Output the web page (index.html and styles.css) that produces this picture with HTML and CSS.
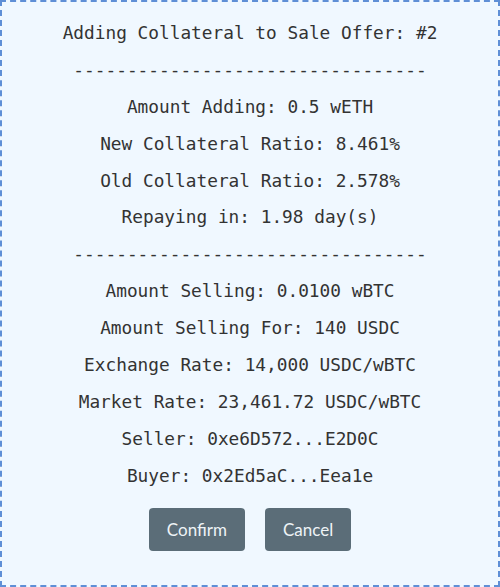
FILE: index.html
```html
<!DOCTYPE html>
<html>
<head>
<meta charset="utf-8">
<link rel="stylesheet" href="styles.css">
</head>
<body>
<div class="dialog">
  <div class="lines">
    <div class="line">Adding Collateral to Sale Offer: #2</div>
    <div class="line">---------------------------------</div>
    <div class="line">Amount Adding: 0.5 wETH</div>
    <div class="line">New Collateral Ratio: 8.461%</div>
    <div class="line">Old Collateral Ratio: 2.578%</div>
    <div class="line">Repaying in: 1.98 day(s)</div>
    <div class="line">---------------------------------</div>
    <div class="line">Amount Selling: 0.0100 wBTC</div>
    <div class="line">Amount Selling For: 140 USDC</div>
    <div class="line">Exchange Rate: 14,000 USDC/wBTC</div>
    <div class="line">Market Rate: 23,461.72 USDC/wBTC</div>
    <div class="line">Seller: 0xe6D572...E2D0C</div>
    <div class="line">Buyer: 0x2Ed5aC...Eea1e</div>
  </div>
  <div class="actions">
    <button class="btn btn-confirm">Confirm</button>
    <button class="btn btn-cancel">Cancel</button>
  </div>
</div>
</body>
</html>
```

FILE: styles.css
```css
html, body {
  margin: 0;
  padding: 0;
}
body {
  background: #f0f8ff;
}
.dialog {
  box-sizing: border-box;
  width: 500px;
  height: 587px;
  border: 2px dashed #5f8fd6;
  background: #f0f8ff;
  padding-top: 13px;
  display: flex;
  flex-direction: column;
  align-items: center;
}
.lines {
  display: flex;
  flex-direction: column;
  align-items: center;
}
.line {
  font-family: "DejaVu Sans Mono", monospace;
  font-size: 17.8px;
  line-height: 36.9px;
  height: 36.9px;
  color: #333333;
  white-space: pre;
}
.actions {
  display: flex;
  gap: 20px;
  margin-top: 13px;
}
.btn {
  font-family: Lato, "Noto Sans", sans-serif;
  font-size: 17px;
  color: #eef3f6;
  background: #5b6d78;
  border: none;
  border-radius: 4px;
  height: 43px;
  padding: 0 18px;
}
```
